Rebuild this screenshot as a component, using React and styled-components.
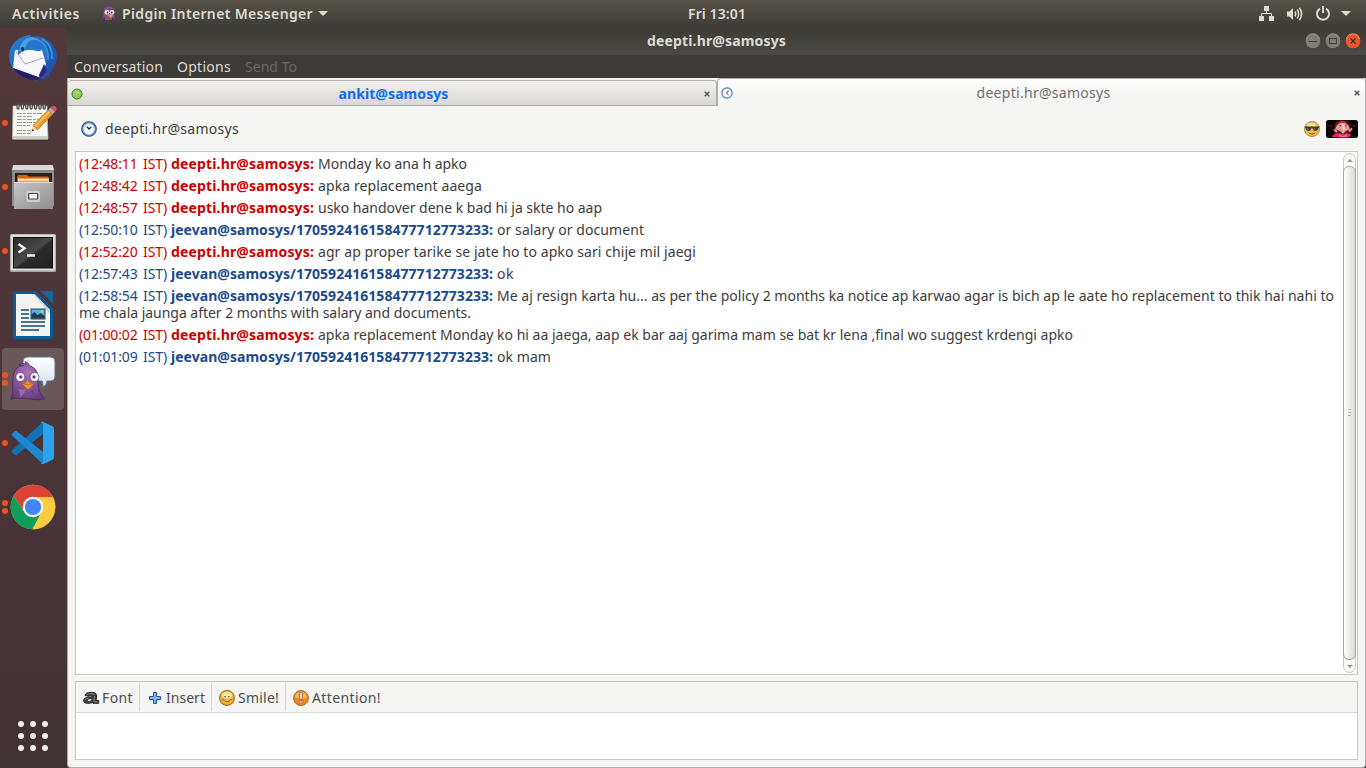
import React, { useLayoutEffect, useRef, useState } from "react";
import styled, { createGlobalStyle } from "styled-components";

const Global = createGlobalStyle`
  * { box-sizing: border-box; }
  html, body { margin: 0; padding: 0; }
  body {
    width: 1366px;
    height: 768px;
    overflow: hidden;
    font-family: "Noto Sans", "Open Sans", sans-serif;
    font-size: 14px;
    line-height: 17px;
    color: #3c3c3c;
  }
  svg { display: block; flex: none; overflow: visible; }
`;

const Label = styled.span`
  display: block;
  flex: none;
  white-space: pre;
  width: ${(p) => p.$width}px;
  color: ${(p) => p.$color || "inherit"};
  font-weight: ${(p) => p.$weight || 400};
  word-spacing: ${(p) => (p.$tight ? -0.8 : 0)}px;
`;

/* Text whose tracking is adjusted so that it fills the given width. */
function Text({ width, color, weight, tight, children }) {
  const ref = useRef(null);
  const [tracking, setTracking] = useState(0);
  useLayoutEffect(() => {
    const natural = ref.current.getBoundingClientRect().width;
    setTracking((width - natural) / children.length);
  }, [width, children]);
  return (
    <Label $width={width} $color={color} $weight={weight} $tight={tight}>
      <span ref={ref} style={{ letterSpacing: `${tracking}px` }}>
        {children}
      </span>
    </Label>
  );
}

/* ---------- shell ---------- */

const Screen = styled.div`
  display: grid;
  grid-template: 27px 741px / 67px 1299px;
  width: 1366px;
  height: 768px;
  overflow: hidden;
`;

const TopBar = styled.header`
  grid-column: 1 / 3;
  display: grid;
  grid-template-columns: 676px 58px 1fr;
  align-items: center;
  padding: 0 15px 0 12px;
  background: linear-gradient(#575349, #3d3c38);
  color: #dfdbd2;
`;

const TopLeft = styled.div`
  display: flex;
  align-items: center;
`;

const AppMenu = styled.div`
  display: flex;
  align-items: center;
  gap: 5px;
  margin-left: 21px;
`;

const Clock = styled.div`
  padding-bottom: 1px;
`;

const Tray = styled.div`
  display: flex;
  align-items: center;
  justify-content: flex-end;
`;

const Spaced = styled.div`
  margin-left: ${(p) => p.$gap || 0}px;
`;

const Dock = styled.nav`
  display: flex;
  flex-direction: column;
  background: linear-gradient(#53383b 0%, #4b3539 50%, #433236 85%, #3f3233 100%);
`;

const DockItem = styled.div`
  flex: none;
  display: flex;
  align-items: center;
  height: 64px;
  padding-left: 2px;
  margin-top: ${(p) => (p.$last ? "auto" : 0)};
`;

const DockTile = styled.div`
  display: flex;
  align-items: center;
  width: 62px;
  height: 62px;
  border-radius: 4px;
  background: ${(p) => (p.$active ? "rgba(255,255,255,0.17)" : "transparent")};
`;

const Dots = styled.div`
  display: flex;
  flex-direction: column;
  gap: 2px;
  width: 7px;
`;

const Dot = styled.i`
  width: 6px;
  height: 6px;
  border-radius: 50%;
  background: #e95420;
`;

/* ---------- window ---------- */

const Window = styled.main`
  display: flex;
  flex-direction: column;
  background: #3c3b37;
`;

const TitleBar = styled.div`
  flex: none;
  display: grid;
  grid-template-columns: 1fr auto 1fr;
  align-items: center;
  height: 28px;
  padding: 0 5px;
  color: #dfdbd2;
  background: linear-gradient(#3b3a36, #4b4a44);
`;

const Title = styled.h1`
  margin: 0;
  padding-bottom: 2px;
  font-size: inherit;
`;

const WindowButtons = styled.div`
  display: flex;
  justify-content: flex-end;
  gap: 4px;
`;

const MenuBar = styled.div`
  flex: none;
  display: flex;
  gap: 14px;
  height: 23px;
  padding: 3px 7px 0;
  color: #dfdbd2;
  background: #3c3b37;
`;

const Body = styled.div`
  flex: 1;
  display: flex;
  flex-direction: column;
  background: #f5f5f3;
  border: 1px solid #b1aeaa;
  border-top: 0;
  border-radius: 0 0 4px 4px;
`;

const Tabs = styled.div`
  flex: none;
  display: flex;
  align-items: flex-end;
  height: 28px;
`;

const Tab = styled.div`
  display: flex;
  align-items: center;
  justify-content: space-between;
  height: 26px;
  width: 649px;
  padding: 1px 6px 0 3px;
  border: 1px solid #b1aeaa;
  border-left: 0;
  border-bottom-color: #a9a7a3;
  border-radius: 4px 4px 0 0;
  background: linear-gradient(#f1f0ee, #dad7d4);
`;

const ActiveTab = styled(Tab)`
  height: 28px;
  width: 648px;
  padding: 0 5px 0 3px;
  border-left: 1px solid #b1aeaa;
  border-right: 0;
  border-bottom: 0;
  background: linear-gradient(#ffffff, #f5f5f3 60%);
`;

const Buddy = styled.div`
  flex: none;
  display: flex;
  align-items: center;
  height: 45px;
  padding: 0 7px 0 13px;
`;

const BuddyRight = styled.div`
  display: flex;
  align-items: center;
  gap: 6px;
  margin-left: auto;
`;

const Panel = styled.section`
  flex: none;
  margin: 0 7px;
  border: 1px solid #c9c7c3;
  background: #fff;
`;

const History = styled(Panel)`
  display: flex;
  height: 524px;
  padding: 1px;
`;

const Log = styled.div`
  flex: 1;
  padding: 2px 0 0 2px;
`;

const Message = styled.article`
  padding-bottom: 5px;
`;

const Line = styled.div`
  display: flex;
  gap: 4px;
`;

const ScrollTrack = styled.div`
  display: flex;
  flex-direction: column;
  align-items: center;
  width: 13px;
  height: 520px;
  border: 1px solid #cac8c5;
  border-radius: 7px;
  background: #f7f7f6;
`;

const ScrollArrow = styled.div`
  display: flex;
  align-items: center;
  justify-content: center;
  height: 12px;
`;

const ScrollThumb = styled.div`
  flex: 1;
  display: flex;
  flex-direction: column;
  align-items: center;
  justify-content: center;
  gap: 2px;
  width: 13px;
  padding-bottom: 2px;
  border: 1px solid #a9a7a4;
  border-radius: 6px;
  background: linear-gradient(90deg, #fdfdfd, #ebeae8 60%, #dcdad8);
`;

const Grip = styled.i`
  width: 3px;
  height: 1px;
  background: #b5b3b0;
`;

const Compose = styled(Panel)`
  margin-top: 6px;
  height: 79px;
`;

const Toolbar = styled.div`
  display: flex;
  height: 31px;
  border-bottom: 1px solid #dcdad7;
  background: #f5f5f3;
`;

const Tool = styled.div`
  display: flex;
  align-items: center;
  gap: 3px;
  height: 29px;
  padding: 2px 6px 0 7px;
  border-right: 1px solid ${(p) => (p.$end ? "transparent" : "#d9d7d4")};
  color: #4c4c4c;
`;

/* ---------- small icons ---------- */

const Caret = () => (
  <svg width="10" height="5"><path d="M0 0h10L5 5z" fill="#dfdbd2" /></svg>
);

const PidginSmall = () => (
  <svg width="16" height="16" viewBox="0 0 16 16">
    <path d="M2.500 14V6C2.500 2 5 .3 8.500.500c4 .2 5 3 5 6 0 4-.8 5 .5 7.500z" fill="#7c4f86" />
    <path d="M1 14.500l3-4v4zM14.500 14.500l-3.500-3v3z" fill="#4e2b5c" />
    <circle cx="6" cy="6.300" r="2.400" fill="#f4eef5" />
    <circle cx="11" cy="6.300" r="2.300" fill="#f4eef5" />
    <circle cx="6.500" cy="6.500" r=".9" fill="#38204a" />
    <circle cx="10.700" cy="6.500" r=".9" fill="#38204a" />
    <path d="M7 9l2-1 3 1.300-2.500 3z" fill="#f5942a" />
  </svg>
);

const NetworkIcon = () => (
  <svg width="15" height="15" viewBox="0 0 15 15">
    <path d="M5 0h5v5H5zM0 10h5v5H0zM10 10h5v5h-5z" fill="#dfdbd2" />
    <path d="M7.500 5v2.500M2.500 10V7.500h10V10" fill="none" stroke="#dfdbd2" />
  </svg>
);

const VolumeIcon = () => (
  <svg width="16" height="14" viewBox="0 0 16 14">
    <path d="M0 4.500h2.500L6 1v12L2.500 9.500H0z" fill="#dfdbd2" />
    <path d="M8 4.500q1.600 2.500 0 5M10.200 2.500q3 4.500 0 9M12.400.7q4.400 6.300 0 12.600" fill="none" stroke="#dfdbd2" strokeWidth="1.500" />
  </svg>
);

const PowerIcon = () => (
  <svg width="14" height="15" viewBox="0 0 14 15">
    <path d="M4 2.600a6 6 0 1 0 6 0M7 0v7" fill="none" stroke="#dfdbd2" strokeWidth="1.900" />
  </svg>
);

const WindowButton = ({ kind }) => {
  const close = kind === "close";
  return (
    <svg width="16" height="16" viewBox="0 0 16 16">
      <circle cx="8" cy="8" r="7.800" fill={close ? "#e8592c" : "#7f7d75"} stroke="#34332f" strokeWidth=".6" />
      <path d="M1.500 6a6.700 6.700 0 0 1 13 0" fill="none" stroke={close ? "#f6906c" : "#99978f"} strokeWidth="1" />
      {kind === "min" && <path d="M4 8.500h8" stroke="#3c3b37" />}
      {kind === "max" && <rect x="4.500" y="5.500" width="7" height="5" fill="none" stroke="#3c3b37" />}
      {close && <path d="M5.500 5.500l5 5m0-5l-5 5" stroke="#3c2a22" strokeWidth="1.200" />}
    </svg>
  );
};

const Online = () => (
  <svg width="12" height="12" viewBox="0 0 12 12">
    <circle cx="6" cy="6" r="5" fill="#92cc5f" stroke="#3e7a0e" />
    <path d="M2.500 5.500a3.700 3.700 0 0 1 7 0z" fill="#acd985" />
  </svg>
);

const TabClose = () => (
  <svg width="6" height="6" viewBox="0 0 6 6">
    <path d="M.7.7l4.600 4.600m0-4.600L.7 5.300" stroke="#4f5760" strokeWidth="1.500" />
  </svg>
);

const AwaySmall = () => (
  <svg width="12" height="12" viewBox="0 0 12 12">
    <circle cx="6" cy="6" r="5.100" fill="#fff" stroke="#3f74b5" strokeWidth="1.100" />
    <path d="M7.800 3.500L5.500 6l2.300 2.300" fill="none" stroke="#333" strokeWidth="1" />
  </svg>
);

const AwayLarge = () => (
  <svg width="16" height="16" viewBox="0 0 16 16">
    <circle cx="8" cy="8" r="7.300" fill="#7aa5dc" stroke="#27508b" strokeWidth="1.100" />
    <circle cx="8" cy="8" r="5.200" fill="#fff" stroke="#c9dbf1" strokeWidth=".8" />
    <path d="M5.800 5.600L8 8l2.200-2" fill="none" stroke="#222" strokeWidth="1.300" />
  </svg>
);

const CoolFace = () => (
  <svg width="16" height="16" viewBox="0 0 16 16">
    <circle cx="8" cy="8" r="7.500" fill="#f0b946" stroke="#b98331" strokeWidth=".9" />
    <ellipse cx="7.500" cy="4" rx="4.500" ry="2.200" fill="#fbe08d" />
    <path d="M.7 5.500h14.600v1.300l-1 .3c-.3 2.300-1.300 3-2.700 3-1.600 0-2.500-1-2.900-2.800H7.300C6.900 9.100 6 10.100 4.400 10.100c-1.400 0-2.400-.7-2.700-3l-1-.3z" fill="#353a3a" />
    <path d="M2.800 7l2 2M10 7l2 2" stroke="#71807e" strokeWidth=".8" />
    <path d="M5 12.200q3 1.800 6 0" fill="none" stroke="#85531b" />
  </svg>
);

const Avatar = () => (
  <svg width="32" height="18" viewBox="0 0 32 18">
    <rect width="32" height="18" rx="2.500" fill="#090304" />
    <path d="M9 9Q7 3 12 2q4-3.500 9 0 5 1 3 7l1 4H8z" fill="#6c1020" />
    <path d="M12 3q4-4 9 0l-1 3h-7z" fill="#d02c3e" />
    <path d="M11 5q5-4 11 0l2 4-4 2-3 3-3-3-5-2z" fill="#df9a99" />
    <path d="M15.500 3.500h3l.5 5q-.5 4-3 4.500 1.300-2 .5-4.500z" fill="#f1c9c9" />
    <path d="M6 17q1-4 7-4l4 1 4-1q4 0 4 3l-2 1.500q-8 .5-17-.5z" fill="#e22559" />
    <path d="M13 14l4 2 4-2v3h-8z" fill="#f16e7e" />
    <path d="M8 9.500l3 2.500M26 8.500l-3 3" stroke="#e79384" strokeWidth="2" />
    <circle cx="14.200" cy="5.700" r=".6" fill="#402" /><circle cx="19.800" cy="5.700" r=".6" fill="#402" />
    <path d="M4 6h2M27 6h2" stroke="#a52b16" />
  </svg>
);

const FontIcon = () => (
  <svg width="16" height="14" viewBox="0 0 16 14">
    <path d="M2 4.500Q2.500 1.300 8 1.300c4.500 0 6 1.500 5.500 4.700L13 9.500h2.700v2.800H10l-.3-1C7.500 12.800.6 13 .6 9.500.6 6.700 4.500 6 8.700 6.300 9 4.800 6.500 4.300 6 5.300z" fill="#3c3c3c" stroke="#202020" strokeWidth="1" />
    <path d="M4.800 9.300q.5-1.600 3.700-1.200-.3 2-1.900 2.100T4.800 9.300z" fill="#e2e2e2" />
    <path d="M3.500 3.500Q7 1.800 11.500 3.300M2 9q.7-1.600 3.300-1.800M11.500 5l-.5 5.800h4" stroke="#8f8f8f" fill="none" strokeWidth=".9" />
  </svg>
);

const PlusIcon = () => (
  <svg width="12" height="12" viewBox="0 0 12 12">
    <path d="M4.500.5h3v4h4v3h-4v4h-3v-4h-4v-3h4z" fill="#87b7ee" stroke="#20539a" />
  </svg>
);

const SmileIcon = () => (
  <svg width="16" height="16" viewBox="0 0 16 16">
    <circle cx="8" cy="8" r="7.400" fill="#f2b63c" stroke="#a3681c" strokeWidth="1.100" />
    <ellipse cx="8" cy="5" rx="5.500" ry="3.400" fill="#fbe191" />
    <ellipse cx="5.800" cy="6.500" rx="1.300" ry="1.700" fill="#fff" />
    <ellipse cx="10.200" cy="6.500" rx="1.300" ry="1.700" fill="#fff" />
    <circle cx="6.100" cy="6.800" r=".8" fill="#222" /><circle cx="9.900" cy="6.800" r=".8" fill="#222" />
    <path d="M2.700 9.500q1 .8 1.800-.1.800 2.400 3.500 2.400t3.500-2.400q.8.900 1.800.1" fill="none" stroke="#99621b" strokeWidth="1" />
  </svg>
);

const AttentionIcon = () => (
  <svg width="16" height="16" viewBox="0 0 16 16">
    <circle cx="8" cy="8" r="7.400" fill="#ee8a22" stroke="#b35a0c" strokeWidth="1" />
    <path d="M2 7.500a6 6 0 0 1 12 0q-6 2.500-12 0z" fill="#f8b565" />
    <path d="M6.400 2.800h3.200L9.200 9.500H6.800z" fill="#fff" stroke="#a74c08" strokeWidth=".8" />
    <circle cx="8" cy="12" r="1.500" fill="#fff" stroke="#a74c08" strokeWidth=".8" />
  </svg>
);

/* ---------- dock icons, all on a 48px grid ---------- */

const Icon48 = ({ children }) => (
  <svg width="48" height="48" viewBox="0 0 48 48">{children}</svg>
);

const Thunderbird = () => (
  <Icon48>
    <defs>
      <linearGradient id="tb" x1="0" y1="0" x2="1" y2="1">
        <stop offset="0" stopColor="#2f83d6" /><stop offset=".5" stopColor="#1a62bd" /><stop offset="1" stopColor="#27479f" />
      </linearGradient>
    </defs>
    <path d="M4 34C-2 25-1 12 8 5c3-2 6-4 12-5l2 2C35-1 47 9 48 21l-1 9-2-1 1 5-3-1 1 5-3-1-1 5-3-2-2 5-3-2c-2 3-4 4-6 4l2-3c-10 1-19-3-24-10z" fill="url(#tb)" />
    <path d="M6 15l28-1 3 15-5 14L4 33z" fill="#f8f8fb" />
    <path d="M4 33l28 10-4 2Q10 44 4 33z" fill="#2b1a66" />
    <path d="M6 15l10 14 18-6" fill="none" stroke="#aaa9b3" strokeWidth="1" />
    <path d="M9 17C9 8 14 2 21 0c2 0 2 1 0 2 11 1 18 10 17 21l-1 6-4-14c-5 3-9-1-13 0-5 0-7 2-11 5z" fill="#2576cb" />
    <path d="M11 12Q14 3 22 2q7 1 9 4-10-3-13 3-1 5-8 8z" fill="#45a1df" />
    <path d="M29 5q11 5 10 20M33 4q11 6 10 20" fill="none" stroke="#3d94da" strokeWidth="1.500" />
    <path d="M35 29l3 6-4 6-7 6 4-2-1-5z" fill="#2d2884" />
    <ellipse cx="13.500" cy="14" rx="1.600" ry="2" fill="#172a4a" />
  </Icon48>
);

const Notepad = () => (
  <Icon48>
    <rect x="3" y="8" width="37" height="34" rx="1.500" fill="#2a2425" opacity=".5" />
    <path d="M4 7h34l1 33H3.500z" fill="#f6f6f2" stroke="#b9bbb2" strokeWidth=".8" />
    <path d="M3.700 37h35.200v3.500H3.500z" fill="#ccd1c5" />
    <g stroke="#4c4c4c" strokeWidth="1.300" fill="#eee">
      {[8, 12.4, 16.8, 21.2, 25.6, 30, 34.2].map((x) => <rect key={x} x={x} y="5" width="2" height="5" rx="1" />)}
    </g>
    <g stroke="#9b9d98" strokeWidth="1" strokeDasharray="5 1 3 1">
      <path d="M8 14.500h25M8 17.500h15M8 20.500h22M8 23.500h18M8 26.500h13M8 31.500h13M8 34.500h14" />
    </g>
    <path d="M22.500 32.500l1.700-6 4.500 4.200z" fill="#f3d7a4" />
    <path d="M24.200 26.500L39 11l4.600 4.200-14.900 15.500z" fill="#f39a2c" stroke="#b5650f" strokeWidth=".7" />
    <path d="M26 27.500L40.500 12.500" stroke="#fdc778" strokeWidth="1.500" />
    <path d="M39 11l2.500-2.600 4.600 4.200-2.500 2.600z" fill="#a9aeb1" />
    <path d="M41.500 8.400Q44 5.500 46.800 7.800q2 2.200-.7 4.800z" fill="#e2494c" />
    <path d="M22.500 32.500l.7-2.500 1.800 1.700z" fill="#222" />
  </Icon48>
);

const Files = () => (
  <Icon48>
    <defs>
      <linearGradient id="cab" x1="0" y1="0" x2="1" y2="1">
        <stop offset="0" stopColor="#c7c7c7" /><stop offset="1" stopColor="#8e8e8e" />
      </linearGradient>
    </defs>
    <path d="M4 2h40l1 5v36H3V7z" fill="#8b8b8b" />
    <path d="M4.500 2h39L45 7H3z" fill="#dadada" />
    <path d="M6 10h37v12H6z" fill="#25211f" />
    <path d="M8 13.500q0-1.500 2-1.500h8l2 1.500h18q2 0 2 1.500v5H8z" fill="#d65d12" />
    <path d="M9 15h31v5H9z" fill="#f7a046" />
    <path d="M9 16h31v1.500H9z" fill="#fff0dc" />
    <path d="M5 19h39v27H5z" fill="url(#cab)" />
    <path d="M5 19.500h39" stroke="#dedede" />
    <rect x="17.500" y="28" width="13.500" height="11" rx="1.500" fill="#cfcfcf" />
    <rect x="19.700" y="30.500" width="9" height="5.500" rx=".5" fill="#f4f4f4" stroke="#454545" strokeWidth="1.200" />
  </Icon48>
);

const TerminalApp = () => (
  <Icon48>
    <defs>
      <linearGradient id="term" x1="0" y1="0" x2="1" y2="1">
        <stop offset="0" stopColor="#2c2c2c" /><stop offset=".5" stopColor="#484848" /><stop offset=".55" stopColor="#2b2b2b" /><stop offset="1" stopColor="#202020" />
      </linearGradient>
    </defs>
    <rect x="1" y="7" width="46" height="38" rx="1.500" fill="#a6a6a4" />
    <rect x="1.800" y="7.500" width="44.400" height="36" rx="1" fill="#dcdcda" />
    <rect x="4.500" y="10.500" width="39" height="30.500" fill="url(#term)" stroke="#111" />
    <path d="M9.500 17l6 4.200-6 4.300M18 28.500h8" fill="none" stroke="#f0f0f0" strokeWidth="2.500" />
  </Icon48>
);

const Writer = () => (
  <Icon48>
    <path d="M6.500 0h20.500L44 18v28q0 2-2 2H6.500Q4 48 4 46V2q0-2 2.500-2z" fill="#0a5d94" />
    <path d="M31.500 0H42q2 0 2 2v10.500z" fill="#0d659d" />
    <path d="M7 3h18.500L41 19v26H7z" fill="#f5f5f3" />
    <path d="M25.500 3L41 19v4L24 3z" fill="#cfd3d5" />
    <path d="M12 19h8M12 23h8M12 27h8M12 31h24M12 35h24M12 39h18" stroke="#104a70" strokeWidth="1.700" />
    <rect x="22" y="18" width="14" height="10" fill="#55b1e3" stroke="#164766" />
    <path d="M22.500 27.500v-4l3-2.500 3 3 3-2 4 3v2.500z" fill="#273b48" />
    <circle cx="33" cy="20.700" r="1.400" fill="#e7c94d" />
  </Icon48>
);

const PidginApp = () => (
  <Icon48>
    <defs>
      <linearGradient id="bub" x1="0" y1="0" x2="0" y2="1">
        <stop offset="0" stopColor="#fff" /><stop offset="1" stopColor="#d6e2f0" />
      </linearGradient>
      <radialGradient id="bird" cx=".5" cy=".3" r=".75">
        <stop offset="0" stopColor="#a873b6" /><stop offset=".55" stopColor="#86539c" /><stop offset="1" stopColor="#623a78" />
      </radialGradient>
    </defs>
    <path d="M19 2h22q5 0 5 5v14q0 5-5 5h-3q0 4-4 6 0-4-1-6H19q-5 0-5-5V7q0-5 5-5z" fill="url(#bub)" stroke="#56779f" strokeWidth="1" />
    <path d="M1.500 44.500C5 37 3 32 4 23 4.500 15 9 10.500 14.500 10.500L9.500 9.500q4-2 7.500-.5l-1-2.500q3.500 1 5 4.300c6 2 8.500 7 8 14.200-.5 8 2 15 7 18.500-6 2.500-12 .5-18 .5-6-.5-11-1.500-16.500.5z" fill="url(#bird)" stroke="#472457" strokeWidth=".7" />
    <path d="M6 43.500q1.500-7 5-10M27 43q-4-4-4-8" stroke="#68407b" fill="none" strokeWidth="1" />
    <path d="M9 34Q12 38 10.500 43q5.500-4 6-8z" fill="#ab7eb6" opacity=".6" />
    <circle cx="11.300" cy="22" r="4.500" fill="#fbf8fb" stroke="#5d3570" strokeWidth=".7" />
    <circle cx="25.500" cy="22" r="4.500" fill="#fbf8fb" stroke="#5d3570" strokeWidth=".7" />
    <circle cx="11.800" cy="22" r="2" fill="#a58fbb" /><circle cx="25" cy="22" r="2" fill="#a58fbb" />
    <circle cx="11.800" cy="22" r=".9" fill="#2c1b36" /><circle cx="25" cy="22" r=".9" fill="#2c1b36" />
    <path d="M12.500 28.500q4 0 6-3 2 2.500 7 2.500l-5.500 6q-2 1-3-1z" fill="#f29530" stroke="#a9570f" strokeWidth=".6" />
    <path d="M13.500 28.600q5 2 11-.2" stroke="#b4590d" fill="none" strokeWidth=".8" />
  </Icon48>
);

const Code = () => (
  <Icon48>
    <path d="M34 2.700V15L7.500 36q-1 .5-1.800-.2l-2.500-2.500q-1-1 0-2z" fill="#1272b8" />
    <path d="M34 45V33L7.500 12q-1-.5-1.800.2l-2.500 2.500q-1 1 0 2z" fill="#1c89d0" />
    <path d="M34 2.700l9.500 4.500Q45 8 45 9.500v29q0 1.500-1.500 2.200L34 45.200q-1.200.2-2.500-1.200 2.500 1 2.500-1.500V5.500Q34 3 31.500 4 33 2.300 34 2.700z" fill="#2ba3ef" />
  </Icon48>
);

const Chrome = () => (
  <Icon48>
    <circle cx="24" cy="24" r="22.300" fill="#fdcb3f" />
    <path d="M4.700 12.800A22.300 22.300 0 0 1 43.500 13.200L43.300 14H24a10 10 0 0 0-8.700 15z" fill="#db4437" />
    <path d="M4.700 12.800L15.300 29A10 10 0 0 0 32.700 29L23.500 46.300A22.300 22.300 0 0 1 4.700 12.800z" fill="#119e5a" />
    <path d="M24 14h19.900a22.300 22.300 0 0 1-20.400 32.300L32.700 29A10 10 0 0 0 24 14z" fill="#fdcb3f" />
    <circle cx="24" cy="24" r="10.200" fill="#f5f5f5" />
    <circle cx="24" cy="24" r="8.100" fill="#4285f4" />
  </Icon48>
);

const AppsGrid = () => (
  <Icon48>
    {[12, 24, 36].map((y) => [12, 24, 36].map((x) => (
      <circle key={`${x}-${y}`} cx={x} cy={y} r="3" fill="#f2f0ee" />
    )))}
  </Icon48>
);

/* ---------- data ---------- */

const RED = "#cc0000";
const BLUE = "#204a87";
const me = { name: "jeevan@samosys/170592416158477712773233:", color: BLUE, nameWidth: 322 };
const her = { name: "deepti.hr@samosys:", color: RED, nameWidth: 143 };

const messages = [
  { time: "12:48:11", from: her, text: "Monday ko ana h apko", width: 149 },
  { time: "12:48:42", from: her, text: "apka replacement aaega", width: 164 },
  { time: "12:48:57", from: her, text: "usko handover dene k bad hi ja skte ho aap", width: 284 },
  { time: "12:50:10", from: me, text: "or salary or document", width: 147 },
  { time: "12:52:20", from: her, text: "agr ap proper tarike se jate ho to apko sari chije mil jaegi", width: 378 },
  { time: "12:57:43", from: me, text: "ok", width: 17 },
  {
    time: "12:58:54", from: me, width: 837,
    text: "Me aj resign karta hu... as per the policy 2 months ka notice ap karwao agar is bich ap le aate ho replacement to thik hai nahi to",
    rest: "me chala jaunga after 2 months with salary and documents.", restWidth: 392,
  },
  { time: "01:00:02", from: her, text: "apka replacement Monday ko hi aa jaega, aap ek bar aaj garima mam se bat kr lena ,final wo suggest krdengi apko", width: 755 },
  { time: "01:01:09", from: me, text: "ok mam", width: 54 },
];

const dock = [
  { icon: <Thunderbird />, dots: 0 },
  { icon: <Notepad />, dots: 1 },
  { icon: <Files />, dots: 1 },
  { icon: <TerminalApp />, dots: 1 },
  { icon: <Writer />, dots: 0 },
  { icon: <PidginApp />, dots: 2, active: true },
  { icon: <Code />, dots: 1 },
  { icon: <Chrome />, dots: 2 },
  { icon: <AppsGrid />, dots: 0, last: true },
];

export default function App() {
  return (
    <Screen>
      <Global />
      <TopBar>
        <TopLeft>
          <Text width={68} weight={600}>Activities</Text>
          <AppMenu>
            <PidginSmall />
            <Text width={191} weight={600}>Pidgin Internet Messenger</Text>
            <Caret />
          </AppMenu>
        </TopLeft>
        <Clock><Text width={58} weight={600}>Fri 13:01</Text></Clock>
        <Tray>
          <Spaced><NetworkIcon /></Spaced>
          <Spaced $gap={13}><VolumeIcon /></Spaced>
          <Spaced $gap={13}><PowerIcon /></Spaced>
          <Spaced $gap={11}><Caret /></Spaced>
        </Tray>
      </TopBar>

      <Dock>
        {dock.map((item, i) => (
          <DockItem key={i} $last={item.last}>
            <DockTile $active={item.active}>
              <Dots>
                {Array.from({ length: item.dots }, (_, d) => <Dot key={d} />)}
              </Dots>
              {item.icon}
            </DockTile>
          </DockItem>
        ))}
      </Dock>

      <Window>
        <TitleBar>
          <span />
          <Title><Text width={139} weight={700}>deepti.hr@samosys</Text></Title>
          <WindowButtons>
            <WindowButton kind="min" />
            <WindowButton kind="max" />
            <WindowButton kind="close" />
          </WindowButtons>
        </TitleBar>
        <MenuBar>
          <Text width={89}>Conversation</Text>
          <Text width={54}>Options</Text>
          <Text width={52} color="#6b6961">Send To</Text>
        </MenuBar>
        <Body>
          <Tabs>
            <Tab>
              <Online />
              <Text width={110} weight={700} color="#0a6cf0">ankit@samosys</Text>
              <TabClose />
            </Tab>
            <ActiveTab>
              <AwaySmall />
              <Text width={134} color="#6f6f6f">deepti.hr@samosys</Text>
              <TabClose />
            </ActiveTab>
          </Tabs>
          <Buddy>
            <AwayLarge />
            <Spaced $gap={8}><Text width={134}>deepti.hr@samosys</Text></Spaced>
            <BuddyRight>
              <CoolFace />
              <Avatar />
            </BuddyRight>
          </Buddy>
          <History>
            <Log>
              {messages.map((m) => (
                <Message key={m.time}>
                  <Line>
                    <Text width={88} color={m.from.color} tight>{`(${m.time}  IST)`}</Text>
                    <Text width={m.from.nameWidth} weight={700} color={m.from.color}>{m.from.name}</Text>
                    <Text width={m.width}>{m.text}</Text>
                  </Line>
                  {m.rest && <Line><Text width={m.restWidth}>{m.rest}</Text></Line>}
                </Message>
              ))}
            </Log>
            <ScrollTrack>
              <ScrollArrow><svg width="6" height="3"><path d="M0 3h6L3 0z" fill="#9a9896" /></svg></ScrollArrow>
              <ScrollThumb><Grip /><Grip /><Grip /></ScrollThumb>
              <ScrollArrow><svg width="6" height="3"><path d="M0 0h6L3 3z" fill="#9a9896" /></svg></ScrollArrow>
            </ScrollTrack>
          </History>
          <Compose>
            <Toolbar>
              <Tool><FontIcon /><Text width={31}>Font</Text></Tool>
              <Tool><Spaced $gap={2}><PlusIcon /></Spaced><Spaced $gap={2}><Text width={39}>Insert</Text></Spaced></Tool>
              <Tool><SmileIcon /><Text width={41}>Smile!</Text></Tool>
              <Tool $end><AttentionIcon /><Text width={69}>Attention!</Text></Tool>
            </Toolbar>
          </Compose>
        </Body>
      </Window>
    </Screen>
  );
}
